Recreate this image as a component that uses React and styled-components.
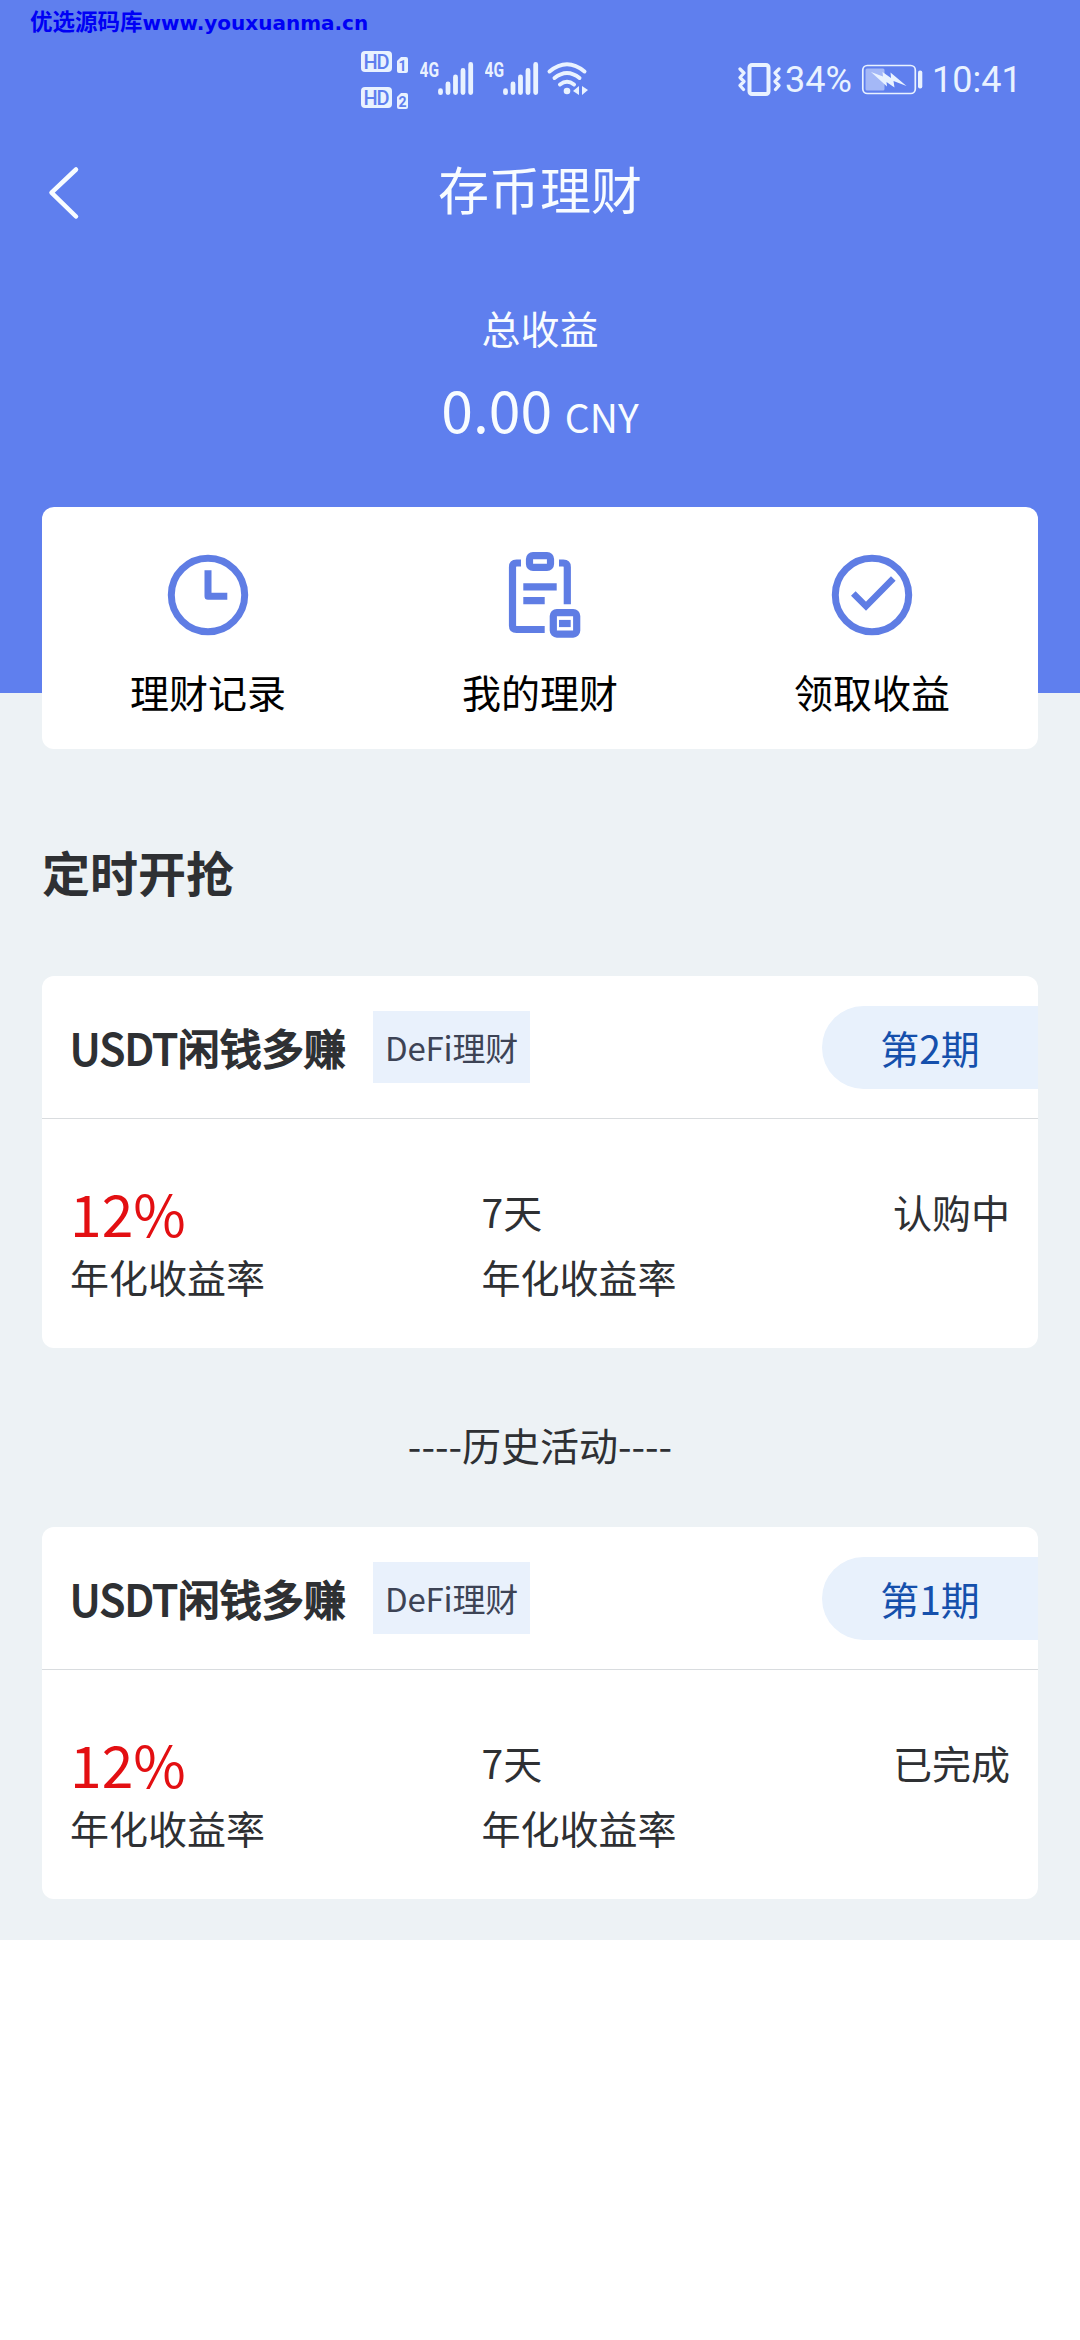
import React from 'react';
import styled, { createGlobalStyle } from 'styled-components';

const BLUE = '#5f7fee';
const ICON_BLUE = '#5f7de4';
const STATUS = '#e9f2ff';

const GlobalStyle = createGlobalStyle`
  * {
    box-sizing: border-box;
  }

  body {
    margin: 0;
    background: #fff;
    font-family: 'Noto Sans CJK SC', 'Noto Sans', sans-serif;
    font-size: 39px;
    color: #2e3033;
  }

  svg {
    display: block;
    flex: none;
  }
`;

const Page = styled.main`
  width: 1080px;
  min-height: 2340px;
  background: #fff;
`;

const Watermark = styled.div`
  position: absolute;
  top: 6px;
  left: 30px;
  display: flex;
  align-items: baseline;
  line-height: 28px;
  font-weight: 700;
  font-size: 22.5px;
  color: #0000f5;
  white-space: nowrap;
`;

const WatermarkUrl = styled.span`
  font-family: 'DejaVu Sans', sans-serif;
  font-size: 20px;
`;

const Hero = styled.header`
  height: 693px;
  background: ${BLUE};
  color: #f8fcff;
`;

const StatusBar = styled.div`
  display: flex;
  align-items: flex-start;
  height: 128px;
  padding: 50px 62px 0 360px;
  color: ${STATUS};
`;

const StatusGroup = styled.div`
  display: flex;
  align-items: flex-start;
  margin-left: ${({ $push }) => ($push ? 'auto' : 0)};
  margin-right: ${({ $push }) => ($push ? 0 : '-4px')};
`;

const StatusText = styled.span`
  width: ${({ $width }) => $width}px;
  font: 400 36px/60px Roboto, sans-serif;
  white-space: nowrap;
`;

const NavBar = styled.nav`
  display: grid;
  grid-template-columns: 120px 1fr 120px;
  align-items: center;
  height: 120px;
`;

const BackButton = styled.button`
  padding: 0 0 0 44px;
  margin-top: 10px;
  border: 0;
  background: none;
  color: inherit;
`;

const NavTitle = styled.h1`
  margin: 0;
  font-size: 51px;
  font-weight: 400;
  line-height: 120px;
  text-align: center;
`;

const Total = styled.section`
  padding-top: 51px;
  text-align: center;
`;

const TotalLabel = styled.div`
  line-height: 56px;
`;

const TotalAmount = styled.div`
  margin-top: 11px;
  font-size: 57px;
  line-height: 84px;

  small {
    font-size: 39px;
  }
`;

const Content = styled.div`
  height: 1247px;
  padding: 0 42px;
  background: #edf2f5;
`;

// overlaps the hero, hence the flow-root wrapper around it
const ContentInner = styled.div`
  margin-top: -186px;
`;

const ContentFlow = styled.div`
  display: flow-root;
  height: 1247px;
`;

const Actions = styled.div`
  display: grid;
  grid-template-columns: repeat(3, 1fr);
  height: 242px;
  padding-top: 43px;
  border-radius: 12px;
  background: #fff;
`;

const Action = styled.div`
  display: flex;
  flex-direction: column;
  align-items: center;
  gap: 23px;
  line-height: 56px;
  color: #000;
`;

const SectionTitle = styled.h2`
  margin: 87px 0 70px;
  font-size: 48px;
  font-weight: 700;
  line-height: 70px;
`;

const Card = styled.article`
  border-radius: 12px;
  background: #fff;
`;

const CardHead = styled.div`
  display: flex;
  align-items: center;
  height: 143px;
  padding-left: 28px;
  border-bottom: 1px solid #d9dcdf;
`;

const CardTitle = styled.h3`
  width: 276px;
  margin: 0;
  font-size: 42px;
  font-weight: 400;
  line-height: 60px;
  white-space: nowrap;
  -webkit-text-stroke: 1.8px currentColor;
`;

const Tag = styled.span`
  width: 157px;
  margin-left: 27px;
  background: #e9f1fc;
  font-size: 33px;
  letter-spacing: -0.2px;
  line-height: 72px;
  text-align: center;
  color: #3d4355;
`;

const Period = styled.span`
  width: 216px;
  margin-left: auto;
  border-radius: 42px 0 0 42px;
  background: #e8f1fc;
  line-height: 83px;
  text-align: center;
  color: #1550ac;
`;

const CardBody = styled.div`
  display: flex;
  justify-content: space-between;
  height: 229px;
  padding: 60px 28px 0;
`;

const Stat = styled.div`
  line-height: 66px;
`;

const StatValue = styled.div`
  font-size: ${({ $rate }) => ($rate ? 57 : 39)}px;
  line-height: ${({ $rate }) => ($rate ? 66 : 64)}px;
  margin-bottom: ${({ $rate }) => ($rate ? -2 : 0)}px;
  color: ${({ $rate }) => ($rate ? '#e30f12' : 'inherit')};
`;

const HistoryTitle = styled.div`
  padding: 66px 0 53px;
  line-height: 60px;
  text-align: center;
`;

const HdIcon = () => (
  <svg width="60" height="60" viewBox="360 50 60 60" fill={STATUS}>
    {[0, 36].map((dy, i) => (
      <g key={dy} transform={`translate(0 ${dy})`}>
        <rect x="361" y="51" width="31" height="21" rx="4" />
        <text x="376.5" y="68.5" textAnchor="middle" textLength="26" fontFamily="Roboto, sans-serif" fontSize="20" fontWeight="500" fill={BLUE}>HD</text>
        <path d="M401 57h5q2 0 2 2v12q0 2-2 2h-7q-2 0-2-2V61z" />
        <text x="402.5" y="70.5" textAnchor="middle" fontFamily="Roboto, sans-serif" fontSize="14" fontWeight="700" fill={BLUE}>{i + 1}</text>
      </g>
    ))}
  </svg>
);

const SignalIcon = () => (
  <svg width="65" height="60" viewBox="420 50 65 60">
    <text x="419.5" y="76.5" textLength="19.5" lengthAdjust="spacingAndGlyphs" fontFamily="Roboto, sans-serif" fontSize="20" fontWeight="700" fill={STATUS}>4G</text>
    <path
      d="M440.5 90.7v2M448 84v8.5M455.5 77v15.5M463 70.5v22M470.7 64.5v28"
      stroke={STATUS}
      strokeWidth="4.8"
      strokeLinecap="round"
    />
  </svg>
);

const WifiIcon = () => (
  <svg width="42" height="60" viewBox="546 50 42 60" fill="none" stroke={STATUS} strokeWidth="4" strokeLinecap="round">
    <path d="M549.5 71.5q17.5-14.5 35 0M554.5 78q12.500-10 25 0M560 84.5q7-5.5 14 0" />
    <circle cx="567" cy="91" r="3.3" fill={STATUS} stroke="none" />
    <path d="M579 86v9l-6-4zM582 86v9l6-5z" fill={STATUS} stroke="none" />
  </svg>
);

const VibrateIcon = () => (
  <svg width="48" height="60" viewBox="735 50 48 60" fill="none" stroke={STATUS} strokeLinejoin="round" strokeLinecap="round">
    <rect x="747.5" y="65" width="19" height="29" rx="2.5" strokeWidth="4" />
    <path d="M738 69l4 4-4 4.5 4 4-4 4 3.5 4M777 69l-4 4 4 4.5-4 4 4 4-3.5 4" strokeWidth="3.2" />
  </svg>
);

const BatteryIcon = () => (
  <svg width="72" height="60" viewBox="858 50 72 60">
    <rect x="860.8" y="65.5" width="52.5" height="28" rx="4.5" fill="none" stroke={STATUS} strokeWidth="1.7" />
    <rect x="863.5" y="68.5" width="19" height="22" rx="1.5" fill={STATUS} opacity=".5" />
    <path d="M869 72l12 4.500-.5-4.500 8.500 6-.5-5.500 16 13.500-13-5 1 6.500-8-5.500.5 4.500z" fill={STATUS} />
    <rect x="916" y="70.5" width="4.3" height="18" rx="2" fill={STATUS} />
  </svg>
);

const BackIcon = () => (
  <svg width="40" height="56" viewBox="44 165 40 56" fill="none">
    <path d="M76 169.5L51.5 192.7L76 216.5" stroke="#f8fcff" strokeWidth="4.5" strokeLinecap="round" strokeLinejoin="round" />
  </svg>
);

const RecordIcon = () => (
  <svg width="90" height="90" viewBox="163 550 90 90" fill="none" stroke={ICON_BLUE} strokeWidth="7">
    <circle cx="208" cy="595" r="36.7" />
    <path d="M208 570.3V596.3H227.3" strokeLinejoin="round" />
  </svg>
);

const PlanIcon = () => (
  <svg width="90" height="90" viewBox="495 550 90 90" fill="none" stroke={ICON_BLUE} strokeWidth="7.2">
    <path d="M521 563h-4.500q-4 0-4 4v58.500q0 4 4 4h28.200M559 563h4.300q4 0 4 4v37.300M523.300 586.800h33.400M523.300 600.700h21.400" />
    <rect x="529.5" y="555.6" width="21" height="11.8" rx="3.5" />
    <rect x="553.3" y="612.6" width="23.4" height="21.5" rx="3.5" />
    <path d="M559 623.5h11.7" />
  </svg>
);

const IncomeIcon = () => (
  <svg width="90" height="90" viewBox="827 550 90 90" fill="none" stroke={ICON_BLUE} strokeWidth="7">
    <circle cx="872" cy="595" r="36.7" />
    <path d="M853.3 593.5L866 606.2L893.3 578.5" strokeWidth="6.5" />
  </svg>
);

const actions = [
  { label: '理财记录', Icon: RecordIcon },
  { label: '我的理财', Icon: PlanIcon },
  { label: '领取收益', Icon: IncomeIcon },
];

const ProductCard = ({ period, status }) => (
  <Card>
    <CardHead>
      <CardTitle>USDT闲钱多赚</CardTitle>
      <Tag>DeFi理财</Tag>
      <Period>{period}</Period>
    </CardHead>
    <CardBody>
      <Stat>
        <StatValue $rate>12%</StatValue>
        年化收益率
      </Stat>
      <Stat>
        <StatValue>7天</StatValue>
        年化收益率
      </Stat>
      <Stat>
        <StatValue>{status}</StatValue>
      </Stat>
    </CardBody>
  </Card>
);

const App = () => (
  <Page>
    <GlobalStyle />
    <Watermark>
      优选源码库
      <WatermarkUrl>www.youxuanma.cn</WatermarkUrl>
    </Watermark>
    <Hero>
      <StatusBar>
        <StatusGroup>
          <HdIcon />
          <SignalIcon />
          <SignalIcon />
        </StatusGroup>
        <WifiIcon />
        <StatusGroup $push>
          <VibrateIcon />
          <StatusText $width={75}>34%</StatusText>
          <BatteryIcon />
          <StatusText $width={86}>10:41</StatusText>
        </StatusGroup>
      </StatusBar>
      <NavBar>
        <BackButton aria-label="返回">
          <BackIcon />
        </BackButton>
        <NavTitle>存币理财</NavTitle>
      </NavBar>
      <Total>
        <TotalLabel>总收益</TotalLabel>
        <TotalAmount>0.00 <small>CNY</small></TotalAmount>
      </Total>
    </Hero>
    <Content>
      <ContentFlow>
        <ContentInner>
          <Actions>
            {actions.map(({ label, Icon }) => (
              <Action key={label}>
                <Icon />
                {label}
              </Action>
            ))}
          </Actions>
          <SectionTitle>定时开抢</SectionTitle>
          <ProductCard period="第2期" status="认购中" />
          <HistoryTitle>----历史活动----</HistoryTitle>
          <ProductCard period="第1期" status="已完成" />
        </ContentInner>
      </ContentFlow>
    </Content>
  </Page>
);

export default App;
